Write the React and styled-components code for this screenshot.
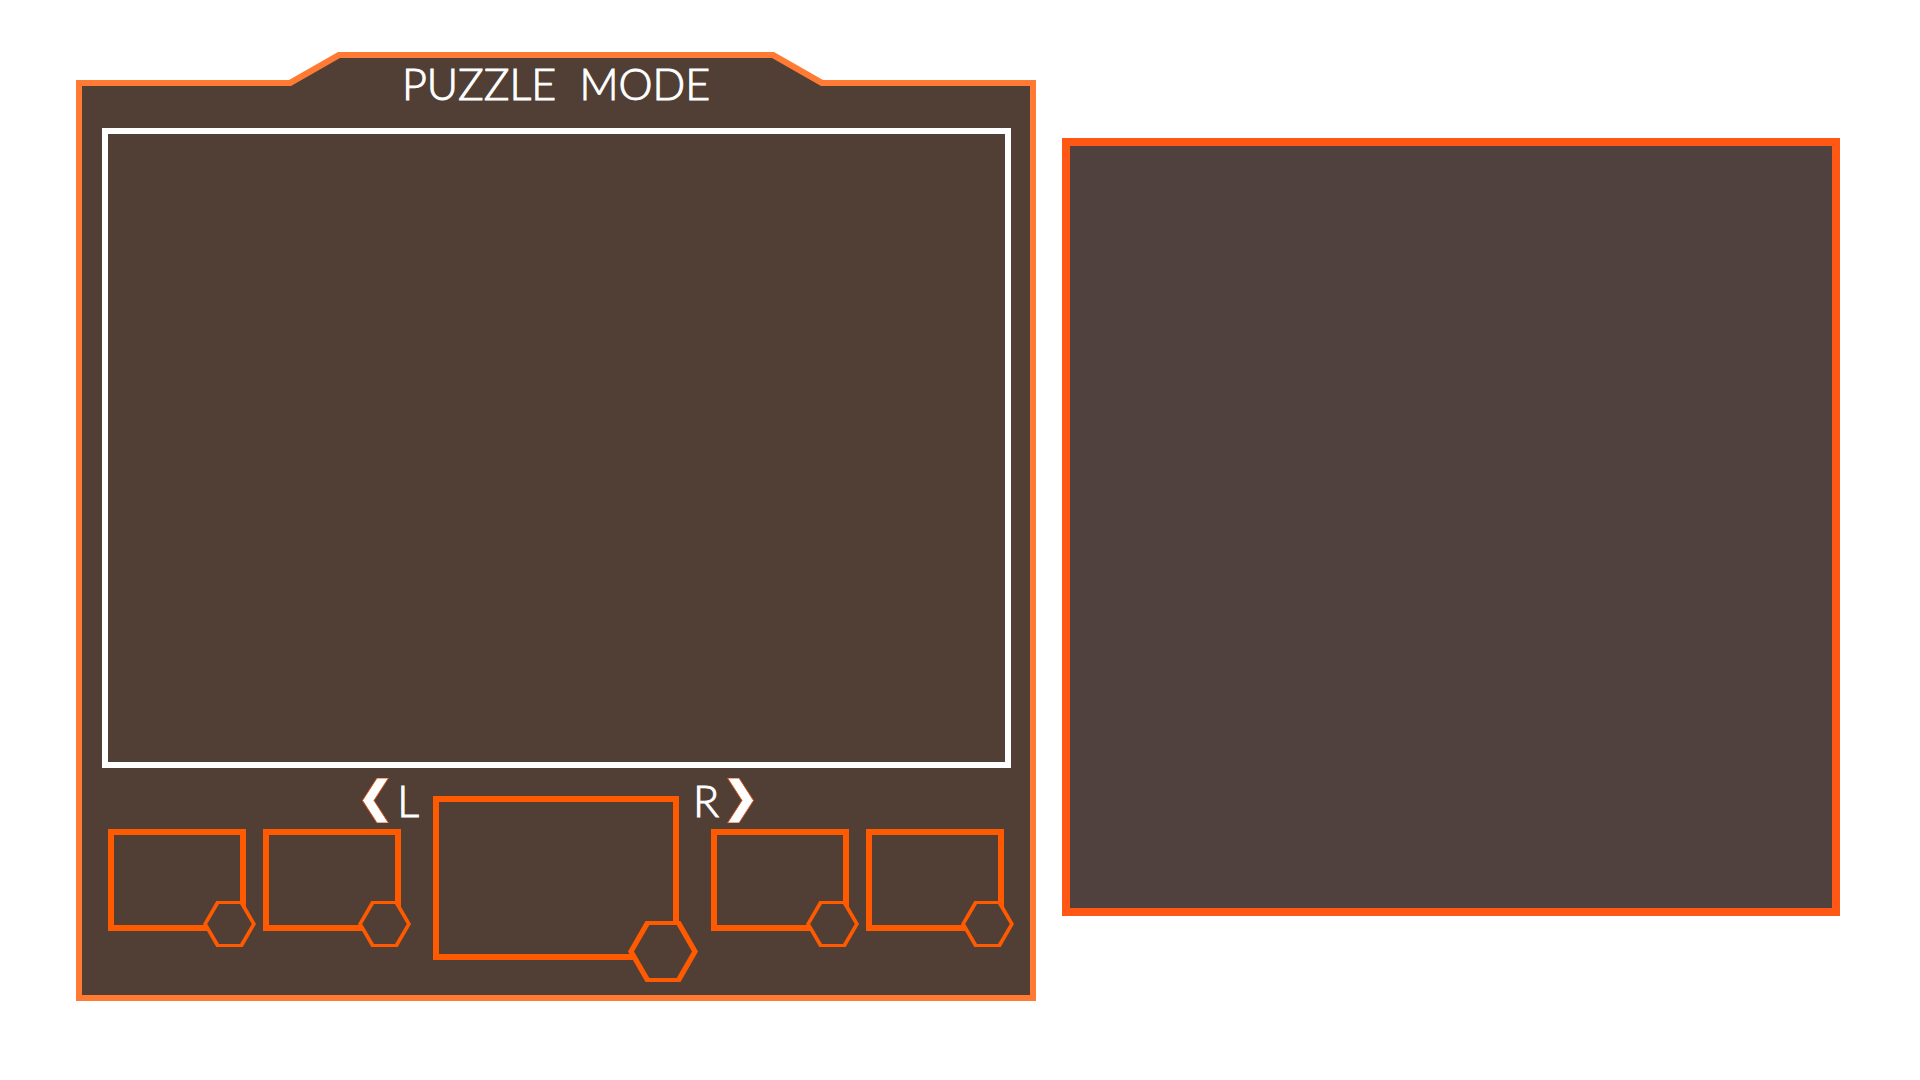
import React from "react";
import styled, { createGlobalStyle, css } from "styled-components";

const colors = {
  panel: "#513f35",
  panelEdge: "#ff7b33",
  slot: "#ff5a00",
  side: "#50413e",
  sideEdge: "#ff5714",
  light: "#ffffff",
};

const GlobalStyle = createGlobalStyle`
  *, *::before, *::after { box-sizing: border-box; }
  body {
    margin: 0;
    background: #ffffff;
    font-family: Lato, "Open Sans", sans-serif;
  }
`;

const Page = styled.main`
  display: grid;
  grid-template-columns: 960fr 778fr;
  align-items: start;
  gap: 26px;
  padding: 52px 80px 52px 76px;
`;

/* Rectangle with a raised tab centred on its top edge */
const tabShape = ({ top, base }) => css`
  clip-path: polygon(
    0 28px,
    calc(50% - ${base}px) 28px,
    calc(50% - ${top}px) 0,
    calc(50% + ${top}px) 0,
    calc(50% + ${base}px) 28px,
    100% 28px,
    100% 100%,
    0 100%
  );
`;

/* Light weight with a one-pixel outline: an even, slender sign-like stroke */
const lettering = css`
  color: ${colors.light};
  font-family: Lato, "Open Sans", sans-serif;
  font-size: 43px;
  font-weight: 300;
  -webkit-text-stroke: 1px ${colors.light};
`;

const PanelEdge = styled.section`
  min-width: 0;
  padding: 6px;
  background: ${colors.panelEdge};
  ${tabShape({ top: 218, base: 267 })}
`;

const PanelBody = styled.div`
  background: ${colors.panel};
  ${tabShape({ top: 216, base: 265 })}
`;

const Title = styled.h1`
  ${lettering}
  height: 70px;
  margin: 0;
  line-height: 52px;
  text-align: center;
  white-space: pre;
`;

const Board = styled.div`
  aspect-ratio: 909 / 640;
  margin: 0 19px 0 20px;
  border: 6px solid ${colors.light};
`;

const Carousel = styled.div`
  display: grid;
  grid-template-columns: 1fr 246px 1fr;
  align-items: start;
  padding: 0 26px 35px;
`;

const Side = styled.div`
  display: flex;
  flex-direction: column;
  align-items: ${({ $end }) => ($end ? "flex-end" : "flex-start")};
  gap: 6px;
  padding-top: 10px;
`;

const StepButton = styled.button`
  ${lettering}
  display: flex;
  align-self: ${({ $end }) => ($end ? "flex-end" : "flex-start")};
  gap: 8px;
  height: 45px;
  margin: 0 14px;
  padding: 0;
  border: 0;
  background: none;
  line-height: 45px;
  cursor: pointer;
`;

const Slots = styled.div`
  display: flex;
  gap: 17px;
`;

const Slot = styled.button`
  position: relative;
  width: ${({ $large }) => ($large ? 246 : 138)}px;
  height: ${({ $large }) => ($large ? 164 : 102)}px;
  margin: ${({ $large }) => ($large ? "28px 0 0" : "0")};
  padding: 0;
  border: 6px solid ${colors.slot};
  background: none;
  cursor: pointer;
`;

const Badge = styled.svg`
  position: absolute;
  right: ${({ $large }) => ($large ? -25 : -16)}px;
  bottom: ${({ $large }) => ($large ? -28 : -22)}px;
`;

const Chevron = styled.svg`
  display: block;
  fill: ${colors.light};
  stroke: #d9561a;
  stroke-width: 1;
`;

const Preview = styled.aside`
  min-width: 0;
  aspect-ratio: 1;
  margin-top: 86px;
  border: 8px solid ${colors.sideEdge};
  background: ${colors.side};
`;

function PuzzleSlot({ label, large }) {
  return (
    <Slot type="button" aria-label={label} $large={large}>
      {large ? (
        <Badge $large width="70" height="61" viewBox="0 0 70 61">
          <polygon fill={colors.slot} points="17.5,0 52.5,0 70,30.5 52.5,61 17.5,61 0,30.5" />
          <polygon fill={colors.panel} points="21.3,4 48.7,4 64,30.5 48.7,57 21.3,57 6,30.5" />
        </Badge>
      ) : (
        <Badge width="53" height="46" viewBox="0 0 53 46">
          <polygon fill={colors.slot} points="13.3,0 39.7,0 53,23 39.7,46 13.3,46 0,23" />
          <polygon fill={colors.panel} points="16,3 37,3 48.8,23 37,43 16,43 4.2,23" />
        </Badge>
      )}
    </Slot>
  );
}

function Arrow({ right }) {
  const points = right
    ? "0.5,0 12,0 26.5,22.5 12,45 0.5,45 15,22.5"
    : "26.5,0 15,0 0.5,22.5 15,45 26.5,45 12,22.5";
  return (
    <Chevron width="27" height="45" viewBox="0 0 27 45" aria-hidden="true">
      <polygon points={points} />
    </Chevron>
  );
}

export default function App() {
  return (
    <>
      <GlobalStyle />
      <Page>
        <PanelEdge>
          <PanelBody>
            <Title>{"PUZZLE  MODE"}</Title>
            <Board />
            <Carousel>
              <Side>
                <StepButton type="button" $end>
                  <Arrow />
                  <span>L</span>
                </StepButton>
                <Slots>
                  <PuzzleSlot label="Puzzle 1" />
                  <PuzzleSlot label="Puzzle 2" />
                </Slots>
              </Side>
              <PuzzleSlot label="Puzzle 3" large />
              <Side $end>
                <StepButton type="button">
                  <span>R</span>
                  <Arrow right />
                </StepButton>
                <Slots>
                  <PuzzleSlot label="Puzzle 4" />
                  <PuzzleSlot label="Puzzle 5" />
                </Slots>
              </Side>
            </Carousel>
          </PanelBody>
        </PanelEdge>
        <Preview />
      </Page>
    </>
  );
}
